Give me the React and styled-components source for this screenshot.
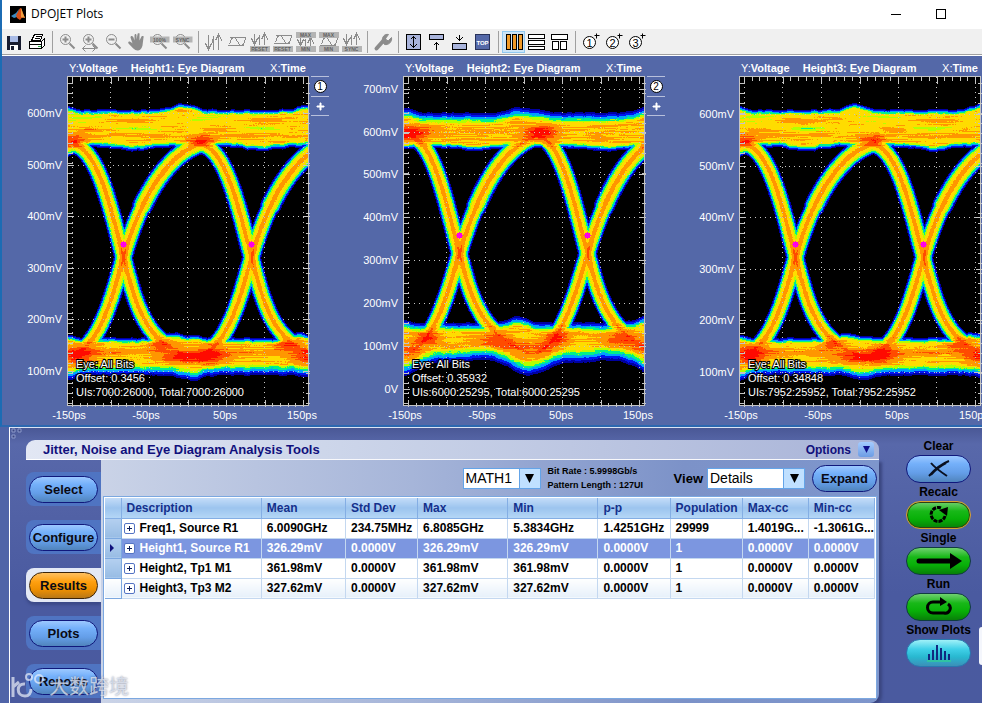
import React, { useState } from "react";
import styled, { createGlobalStyle, css } from "styled-components";

const PLOT_W = 242;
const PLOT_H = 330;
const PERIOD = 128;

const HEAT = [
  "",
  "#0000a0",
  "#0014f0",
  "#00a0ff",
  "#00f08c",
  "#b4ff00",
  "#ffdc00",
  "#ff9600",
  "#ff4b00",
  "#ff0a00",
];

const GRID_X = [5, 43, 82, 120, 159, 197, 236];

const baseEye = {
  seed: 3,
  falling: [[5, 68], [30, 71], [43, 131], [56, 181], [69, 231], [78, 266], [122, 279]],
  rising: [[6, 278], [34, 268], [46, 215], [56, 181], [66, 147], [80, 110], [106, 84], [114, 76], [124, 70], [136, 66]],
  topBand: {
    y0: 33, y1: 66,
    up: [[116, 6, 15]],
    down: [[66, 4, 18]],
    core: 6.7, k0: 1, k1: 0.9,
  },
  lowBand: {
    y0: 261, y1: 294,
    up: [[104, 5, 12], [126, 2, 12]],
    down: [[124, 5, 14]],
    core: 6.8, k0: 0.9, k1: 0.5,
  },
  hot: [
    [5, 64, 16, 5, 1.6], [133, 64, 16, 5, 1.6], [68, 52, 18, 2, -1.4], [196, 52, 18, 2, -1.4],
    [14, 42, 20, 5, -0.8], [142, 42, 20, 5, -0.8], [70, 44, 26, 2, 0.8], [200, 44, 26, 2, 0.8],
    [150, 53, 14, 2, 1], [22, 53, 14, 2, 1], [60, 59, 60, 2, 0.7], [190, 59, 60, 2, 0.7],
    [12, 279, 16, 8, 2.3], [143, 279, 16, 8, 2], [90, 269, 12, 6, 1.5], [218, 269, 12, 6, 1.5],
    [118, 281, 24, 5, 2.2], [240, 280, 16, 6, 2.2], [50, 276, 40, 3, 1], [178, 276, 40, 3, 1],
  ],
};

const plots = [
  {
    id: 1,
    title: "Height1: Eye Diagram",
    labels: [["600mV", 37], ["500mV", 89], ["400mV", 140], ["300mV", 192], ["200mV", 243], ["100mV", 295]],
    notes: ["Eye: All Bits", "Offset: 0.3456", "UIs:7000:26000, Total:7000:26000"],
    marker: 168,
    eye: baseEye,
  },
  {
    id: 2,
    title: "Height2: Eye Diagram",
    labels: [["700mV", 13], ["600mV", 56], ["500mV", 98], ["400mV", 141], ["300mV", 184], ["200mV", 227], ["100mV", 270], ["0V", 313]],
    notes: ["Eye: All Bits", "Offset: 0.35932", "UIs:6000:25295, Total:6000:25295"],
    marker: 159,
    eye: {
      seed: 11,
      falling: [[8, 60], [30, 66], [42, 124], [56, 177], [66, 214], [74, 256], [124, 276]],
      rising: [[6, 276], [32, 264], [44, 216], [56, 177], [66, 144], [82, 100], [106, 77], [114, 69], [124, 62], [136, 58]],
      topBand: { y0: 36, y1: 67, up: [[114, 5, 14], [6, 3, 10]], down: [[74, 3, 18]], core: 6.9, k0: 0.5, k1: 0.9 },
      lowBand: { y0: 246, y1: 278, up: [[114, 6, 14]], down: [[126, 16, 26], [52, 3, 20]], core: 6.9, k0: 0.6, k1: 0.4 },
      hot: [
        [8, 56, 20, 6, 2.4], [138, 56, 16, 6, 2.4], [72, 55, 34, 6, 0.2], [200, 55, 34, 6, 0.2],
        [26, 262, 12, 6, 1.8], [154, 262, 12, 6, 1.8], [88, 264, 16, 7, 1.4], [216, 264, 16, 7, 1.4],
        [112, 270, 24, 6, 0.9], [140, 272, 12, 7, 0.8], [8, 272, 12, 8, 0.8], [240, 270, 12, 7, 1],
      ],
    },
  },
  {
    id: 3,
    title: "Height3: Eye Diagram",
    labels: [["600mV", 38], ["500mV", 90], ["400mV", 141], ["300mV", 193], ["200mV", 244], ["100mV", 296]],
    notes: ["Eye: All Bits", "Offset: 0.34848", "UIs:7952:25952, Total:7952:25952"],
    marker: 168,
    eye: { ...baseEye, seed: 23 },
  },
];

const hash = (a, b, c) => {
  const s = Math.sin(a * 127.1 + b * 311.7 + c * 74.7) * 43758.5453;
  return s - Math.floor(s);
};

const smooth = (x, row, seed) => {
  const i = Math.floor(x);
  const f = x - i;
  return hash(i, row, seed) * (1 - f) + hash(i + 1, row, seed) * f;
};

const bezier = (pts) => {
  const out = [];
  for (let s = 0; s + 3 < pts.length; s += 3) {
    const [a, b, c, d] = pts.slice(s, s + 4);
    for (let i = 0; i <= 130; i++) {
      const t = i / 130;
      const u = 1 - t;
      out.push(
        [0, 1].map((k) => u * u * u * a[k] + 3 * u * u * t * b[k] + 3 * u * t * t * c[k] + t * t * t * d[k])
      );
    }
  }
  return out;
};

// distance from the trace centre (0..1) against heat level
const PROFILE = [[0, 7.6], [0.18, 7.1], [0.36, 6.5], [0.54, 5.8], [0.64, 4.9], [0.74, 4], [0.82, 3], [0.9, 2], [1, 1]];

const traceLevel = (u) => {
  if (u >= 1) return 0;
  for (let i = 1; i < PROFILE.length; i++) {
    if (u <= PROFILE[i][0]) {
      const [u0, l0] = PROFILE[i - 1];
      const [u1, l1] = PROFILE[i];
      return l0 + ((l1 - l0) * (u - u0)) / (u1 - u0);
    }
  }
  return 0;
};

const bumps = (x, list) =>
  list.reduce((sum, [cx, amp, w]) => {
    let d = (((x - cx) % PERIOD) + PERIOD) % PERIOD;
    if (d > PERIOD / 2) d -= PERIOD;
    return sum + amp * Math.exp(-(d * d) / (w * w));
  }, 0);

// builds one run-length path per heat level
const buildEye = ({ seed, falling, rising, topBand, lowBand, hot }) => {
  const dist = new Float32Array(PLOT_W * PLOT_H).fill(9);
  [falling, rising].forEach((curve) => {
    bezier(curve).forEach(([cx, cy]) => {
      [-PERIOD, 0, PERIOD].forEach((shift) => {
        const px = cx + shift;
        if (px < -12 || px > PLOT_W + 12) return;
        const r = curve === rising && cy < 130 ? 10.6 : 9.4;
        for (let y = Math.floor(cy - 12); y <= cy + 12; y++) {
          if (y < 0 || y >= PLOT_H) continue;
          for (let x = Math.max(0, Math.floor(px - 12)); x <= px + 12 && x < PLOT_W; x++) {
            const u = Math.hypot(x - px, y - cy) / r;
            const i = y * PLOT_W + x;
            if (u < dist[i]) dist[i] = u;
          }
        }
      });
    });
  });

  const bandLevel = (x, y, b) => {
    const ragged = (smooth(x / 5, 1, seed) - 0.5) * 2;
    const t0 = y - (b.y0 - bumps(x, b.up) + ragged);
    const t1 = b.y1 + bumps(x, b.down) + 5 - ragged - y;
    if (t0 < 0 || t1 < 0) return 0;
    return Math.min(b.core, 1 + t0 * b.k0, 1 + t1 * b.k1);
  };

  const paths = HEAT.map(() => "");
  for (let y = 0; y < PLOT_H; y++) {
    let start = 0;
    let prev = 0;
    for (let x = 0; x <= PLOT_W; x++) {
      let level = 0;
      if (x < PLOT_W) {
        const trace = traceLevel(dist[y * PLOT_W + x]);
        const band = Math.max(bandLevel(x, y, topBand), bandLevel(x, y, lowBand));
        let v = Math.max(trace, band);
        if (v > 0) {
          v += 0.07 * Math.min(trace, band);
          if (band > 0) {
            hot.forEach(([hx, hy, rx, ry, amp]) => {
              const q = ((x - hx) / rx) ** 2 + ((y - hy) / ry) ** 2;
              if (q < 5 && v > 5) v += amp * Math.exp(-q);
            });
            if (v > 4) v += (smooth(x / 16, y, seed) - 0.5) * 1.1;
          } else {
            // traces pile up where the edges cross
            const q = ((((x - 56) % PERIOD) / 5) ** 2) + ((y - falling[3][1]) / 12) ** 2;
            if (v > 6) v += 0.9 * Math.exp(-q);
          }
          v += (hash(x, y, seed) - 0.5) * 0.25;
          level = Math.max(0, Math.min(9, Math.floor(v)));
        }
      }
      if (level !== prev || x === PLOT_W) {
        if (prev > 0) paths[prev] += `M${start} ${y}h${x - start}v1h${start - x}z`;
        start = x;
        prev = level;
      }
    }
  }
  return paths;
};

plots.forEach((p) => {
  p.paths = buildEye(p.eye);
});

const columns = [
  ["Description", 140], ["Mean", 84], ["Std Dev", 72], ["Max", 90], ["Min", 90],
  ["p-p", 72], ["Population", 72], ["Max-cc", 66], ["Min-cc", 66],
];

const results = [
  ["Freq1, Source R1", "6.0090GHz", "234.75MHz", "6.8085GHz", "5.3834GHz", "1.4251GHz", "29999", "1.4019G...", "-1.3061G..."],
  ["Height1, Source R1", "326.29mV", "0.0000V", "326.29mV", "326.29mV", "0.0000V", "1", "0.0000V", "0.0000V"],
  ["Height2, Tp1 M1", "361.98mV", "0.0000V", "361.98mV", "361.98mV", "0.0000V", "1", "0.0000V", "0.0000V"],
  ["Height3, Tp3 M2", "327.62mV", "0.0000V", "327.62mV", "327.62mV", "0.0000V", "1", "0.0000V", "0.0000V"],
];

const tabs = ["Select", "Configure", "Results", "Plots", "Reports"];

/* ---------- icons ---------- */

const IconText = styled.text`
  font: bold 5px "Liberation Sans", sans-serif;
  fill: #606060;
`;

const DigitText = styled.text`
  font: 11px "Liberation Sans", sans-serif;
  fill: #000;
`;

const TopText = styled.text`
  font: bold 6px "Liberation Sans", sans-serif;
  fill: #fff;
`;

const Icon = ({ children, soft }) => (
  <svg width="20" height="20" viewBox="0 0 20 20" fill="none" shapeRendering={soft ? "auto" : "crispEdges"}>
    <g transform="translate(0.5 0.5)">{children}</g>
  </svg>
);

const Plate = ({ y, text }) => (
  <>
    <rect x="-1" y={y} width="20" height="6" fill="#b4b4b4" />
    <IconText x="9" y={y + 5} textAnchor="middle">{text}</IconText>
  </>
);

const Arrows = ({ top = 2, bottom = 17 }) => (
  <path
    d={`M1 ${bottom - 6}L4 ${bottom}L7 ${bottom - 6}M4 ${top}V${bottom}M7 ${bottom - 4}L9 ${top + 2}M9 ${top + 2}V${bottom}M14 ${top}V${bottom}M11 ${top + 6}L14 ${top}L18 ${top + 7}`}
    stroke="#8c8c8c"
  />
);

const Waves = ({ top = 5 }) => (
  <path d={`M2 ${top}H18M0 ${top + 8}H16M2 ${top + 7}Q5 ${top - 5} 10 ${top + 4}T18 ${top + 1}`} stroke="#8c8c8c" />
);

const Lens = ({ children }) => (
  <Icon soft>
    <circle cx="7" cy="7" r="5" stroke="#8c8c8c" />
    <path d="M11 11l5 5" stroke="#8c8c8c" strokeWidth="2" />
    {children}
  </Icon>
);

const NumberIcon = ({ n }) => (
  <Icon soft>
    <circle cx="8" cy="10" r="6" stroke="#000" fill="#fff" />
    <DigitText x="8" y="14" textAnchor="middle">{n}</DigitText>
    <path d="M15 1v5M13 3h5" stroke="#000" />
  </Icon>
);

const toolGroups = [
  [
    ["Save", <Icon><path d="M2 3h13l1 1v13H2z" fill="#181c30" /><path d="M5 3h8v6H5z" fill="#a9bbe6" /><path d="M5 12h8v5H5z" fill="#fff" /><path d="M6 13h3v4H6z" fill="#181c30" /></Icon>],
    ["Print", <Icon><path d="M7 2h8l-2 6H4z" fill="#fff" stroke="#000" /><path d="M8 4h5M7 6h5" stroke="#000" /><path d="M2 9h12l3-3v7l-3 3H2z" fill="#fff" stroke="#000" /><path d="M14 9v7M2 12h12" stroke="#000" /><path d="M10 14h3" stroke="#20b040" /></Icon>],
  ],
  [
    ["Zoom in", <Lens><path d="M7 4v6M4 7h6" stroke="#8c8c8c" strokeWidth="2" /></Lens>],
    ["Zoom horizontally", <Lens><path d="M7 4v6M4 7h6" stroke="#8c8c8c" strokeWidth="2" /><path d="M1 16h13M4 13l-3 3 3 3M11 13l3 3-3 3" stroke="#8c8c8c" /></Lens>],
    ["Zoom out", <Lens><path d="M4 7h6" stroke="#8c8c8c" strokeWidth="2" /></Lens>],
    ["Pan", <Icon soft><path d="M5 11L3 5c0-2 2-2 3 0l1 3V3c0-2 2-2 2 0v4l1-5c0-2 3-1 2 0v6l2-4c1-1 3 0 2 1l-1 8c-1 4-3 5-5 5-3 0-5-3-9-7-1-2 1-3 4 0z" fill="#8c8c8c" /></Icon>],
    ["Zoom to 100%", <Lens><Plate y={4} text="100%" /></Lens>],
    ["Sync zoom", <Lens><Plate y={4} text="SYNC" /></Lens>],
  ],
  [
    ["Vertical cursors", <Icon><Arrows /></Icon>],
    ["Horizontal cursors", <Icon><Waves /></Icon>],
    ["Reset vertical cursors", <Icon><Arrows top={1} bottom={12} /><Plate y={13} text="RESET" /></Icon>],
    ["Reset horizontal cursors", <Icon><Waves top={3} /><Plate y={13} text="RESET" /></Icon>],
    ["Vertical max min", <Icon><Arrows top={5} bottom={13} /><Plate y={-1} text="MAX" /><Plate y={13} text="MIN" /></Icon>],
    ["Horizontal max min", <Icon><Waves top={5} /><Plate y={-1} text="MAX" /><Plate y={13} text="MIN" /></Icon>],
    ["Sync cursors", <Icon><Arrows top={1} bottom={12} /><Plate y={13} text="SYNC" /></Icon>],
  ],
  [
    ["Configure plot", <Icon soft><path d="M3 16l8-9" stroke="#8c8c8c" strokeWidth="4" strokeLinecap="round" /><path d="M9 9c-1-4 2-8 6-7l-3 4 1 2 2 0 3-3c1 4-3 8-7 7z" fill="#8c8c8c" stroke="#8c8c8c" /></Icon>],
  ],
  [
    ["Full height", <Icon><rect x="2" y="2" width="14" height="15" fill="#a9b4dc" stroke="#000" /><path d="M9 4v11M6 7l3-3 3 3M6 12l3 3 3-3" stroke="#000" /></Icon>],
    ["Dock top", <Icon><rect x="2" y="2" width="14" height="5" fill="#a9b4dc" stroke="#000" /><path d="M9 10v7M6 13l3-3 3 3" stroke="#000" /></Icon>],
    ["Dock bottom", <Icon><rect x="2" y="11" width="14" height="6" fill="#a9b4dc" stroke="#000" /><path d="M9 2v6M6 5l3 3 3-3" stroke="#000" /></Icon>],
    ["Always on top", <Icon><rect x="2" y="2" width="14" height="15" fill="#5468a8" stroke="#28325a" /><TopText x="9" y="12" textAnchor="middle">TOP</TopText></Icon>],
  ],
  [
    ["Columns", <Icon><path d="M2 2h4v15H2zM8 2h4v15H8zM14 2h4v15h-4z" fill="#f09a28" stroke="#000" /></Icon>],
    ["Rows", <Icon><path d="M1 2h16v4H1zM1 8h16v4H1zM1 14h16v3H1z" fill="#fff" stroke="#000" /></Icon>],
    ["Mixed", <Icon><path d="M1 2h16v5H1zM2 9h6v8H2zM10 9h6v8h-6z" fill="#fff" stroke="#000" /></Icon>],
  ],
  [
    ["Plot 1", <NumberIcon n="1" />],
    ["Plot 2", <NumberIcon n="2" />],
    ["Plot 3", <NumberIcon n="3" />],
  ],
];

const actions = [
  ["Clear", "blue", <svg width="26" height="18" viewBox="0 0 26 18"><path d="M5 3c4 5 10 9 16 13M23 1C15 4 9 9 3 16M20 3C14 6 9 10 5 15" fill="none" stroke="#0a1020" strokeWidth="2" /></svg>],
  ["Recalc", "recalc", <svg width="24" height="18" viewBox="0 0 24 18"><path d="M18 10a7 7 0 1 1-4-8" fill="none" stroke="#000" strokeWidth="3" strokeDasharray="4 1" /><path d="M12 4l9-3-1 9z" fill="#000" /></svg>],
  ["Single", "green", <svg width="46" height="18" viewBox="0 0 46 18"><path d="M3 9h32" stroke="#000" strokeWidth="5" strokeLinecap="round" /><path d="M34 1l12 8-12 8z" fill="#000" /></svg>],
  ["Run", "green", <svg width="28" height="20" viewBox="0 0 28 20"><path d="M17 5H8a5 5 0 0 0 0 11h11a5 5 0 0 0 4-9" fill="none" stroke="#000" strokeWidth="3" /><path d="M15 0l7 5-7 4z" fill="#000" /></svg>],
  ["Show Plots", "cyan", <svg width="26" height="18" viewBox="0 0 26 18"><path d="M3 16V10M7 16V6M11 16V1M15 16V4M19 16V7M23 16v-6" stroke="#102880" strokeWidth="2" /><path d="M1 17h24" stroke="#30e080" /></svg>],
];

const ticks = (axis) => {
  let d = "";
  if (axis === "x") {
    for (let i = 0; i < 31; i++) {
      const x = Math.round(5 + i * 7.7);
      const len = i % 5 === 0 ? 7 : 4;
      d += `M${x} 0v${len}M${x} ${PLOT_H}v-${len}`;
    }
  } else {
    for (let y = 7; y < PLOT_H; y += 10) d += `M0 ${y}h5M${PLOT_W} ${y}h-4`;
  }
  return d;
};

const EyePlot = ({ plot }) => (
  <Chart width="309" height="350" viewBox="-67 0 309 350" role="img" aria-label={plot.title}>
    <rect width={PLOT_W} height={PLOT_H} fill="#000" />
    <g shapeRendering="crispEdges">
      {plot.paths.map((d, i) => (d ? <path key={i} d={d} fill={HEAT[i]} /> : null))}
      <g stroke="#c4c4c4" fill="none" transform="translate(0.5 0.5)">
        {GRID_X.map((x) => (
          <path key={x} d={`M${x} 0V${PLOT_H}`} strokeDasharray="1 4" />
        ))}
        {plot.labels.map(([text, y]) => (
          <React.Fragment key={text}>
            <path d={`M0 ${y}H${PLOT_W}`} strokeDasharray="1 4" />
            <path d={`M0 ${y}h6M${PLOT_W} ${y}h-6`} />
          </React.Fragment>
        ))}
        <path d={ticks("x")} />
        <path d={ticks("y")} />
        <rect width={PLOT_W - 1} height={PLOT_H - 1} />
      </g>
      {[56, 184].map((x) => (
        <path key={x} d={`M${x - 2} ${plot.marker - 2}h5v5h-5zM${x - 3} ${plot.marker}h7v1h-7zM${x} ${plot.marker - 3}h1v7h-1z`} fill="#ff00e6" />
      ))}
    </g>
    {plot.labels.map(([text, y]) => (
      <AxisText key={text} x="-5" y={y + 4} textAnchor="end">{text}</AxisText>
    ))}
    {[["-150ps", 2], ["-50ps", 79], ["50ps", 158], ["150ps", 235]].map(([text, x]) => (
      <AxisText key={text} x={x} y="343" textAnchor="middle">{text}</AxisText>
    ))}
    {plot.notes.map((text, i) => (
      <NoteText key={text} x="9" y={292 + i * 14}>{text}</NoteText>
    ))}
  </Chart>
);

const PlotPane = ({ plot }) => (
  <Pane>
    <PaneTitle>
      <span>Y:<b>Voltage</b></span>
      <b>{plot.title}</b>
      <PaneAxis>X:<b>Time</b></PaneAxis>
    </PaneTitle>
    <PaneBody>
      <EyePlot plot={plot} />
      <PaneTools>
        <PaneButton aria-label={`Plot ${plot.id}`}><PlotNumber>{plot.id}</PlotNumber></PaneButton>
        <PaneButton aria-label="Add">
          <svg width="9" height="9" viewBox="0 0 9 9"><path d="M4 1h1v3h3v1H5v3H4V5H1V4h3z" fill="#fff" stroke="#fff" /></svg>
        </PaneButton>
      </PaneTools>
    </PaneBody>
  </Pane>
);

const Triangle = ({ size = 9, color = "#000" }) => (
  <svg width={size} height={size} viewBox="0 0 10 10"><path d="M0 0h10L5 10z" fill={color} /></svg>
);

const Combo = ({ label, options, width }) => {
  const [value, setValue] = useState(options[0]);
  return (
    <ComboBox $width={width}>
      <ComboSelect aria-label={label} value={value} onChange={(e) => setValue(e.target.value)}>
        {options.map((o) => <option key={o}>{o}</option>)}
      </ComboSelect>
      <ComboArrow><Triangle /></ComboArrow>
    </ComboBox>
  );
};

const App = () => {
  const [tab, setTab] = useState("Results");
  const [selected, setSelected] = useState(1);

  return (
    <Page>
      <GlobalStyle />
      <PlotWindow>
        <TitleBar>
          <svg width="16" height="18" viewBox="0 0 16 18">
            <rect width="16" height="17" y="1" fill="#000" />
            <path d="M1 11l5-3 3-4-2 8-3 1z" fill="#3a8ac0" />
            <path d="M6 10c2-2 3-7 5-7 1 2 2 6 4 10-2-1-3-1-5 2L7 13z" fill="#d85018" />
            <path d="M11 3c1 2 2 6 4 10-2-1-3 0-4-1z" fill="#f0a040" />
          </svg>
          <WindowName>DPOJET Plots</WindowName>
          <WindowButton aria-label="Minimize">
            <svg width="10" height="10" viewBox="0 0 10 10"><path d="M0 5h10v1H0z" fill="#000" /></svg>
          </WindowButton>
          <WindowButton aria-label="Maximize">
            <svg width="10" height="10" viewBox="0 0 10 10"><path d="M0 0h10v10H0zM1 1v8h8V1z" fill="#000" fillRule="evenodd" /></svg>
          </WindowButton>
        </TitleBar>
        <Toolbar>
          {toolGroups.map((group, i) => (
            <ToolGroup key={i}>
              {group.map(([name, icon]) => (
                <ToolButton key={name} aria-label={name} $active={name === "Columns"}>{icon}</ToolButton>
              ))}
            </ToolGroup>
          ))}
        </Toolbar>
        <PlotArea>
          {plots.map((p) => <PlotPane key={p.id} plot={p} />)}
        </PlotArea>
      </PlotWindow>

      <Console>
        <Grip width="11" height="11" viewBox="0 0 11 11">
          <path d="M1 1h3v3H1zM7 1h3v3H7zM1 7h3v3H1z" fill="#3a4580" stroke="#8c9acb" />
        </Grip>
        <Tools>
          <ToolsHeader>
            <ToolsTitle>Jitter, Noise and Eye Diagram Analysis Tools</ToolsTitle>
            <OptionsLabel id="options">Options</OptionsLabel>
            <OptionsButton aria-labelledby="options"><Triangle size={7} color="#10108c" /></OptionsButton>
          </ToolsHeader>
          <ToolsBody>
            <Tabs>
              {tabs.map((name) => (
                <TabSlot key={name} $active={name === tab}>
                  <Pill $tone={name === tab ? "orange" : "blue"} onClick={() => setTab(name)}>{name}</Pill>
                </TabSlot>
              ))}
            </Tabs>
            <Content>
              <Controls>
                <Combo label="Source" options={["MATH1", "MATH2"]} width={78} />
                <Rates>
                  <span>Bit Rate : 5.9998Gb/s</span>
                  <span>Pattern Length : 127UI</span>
                </Rates>
                <ViewLabel>View</ViewLabel>
                <Combo label="View" options={["Details", "Summary"]} width={98} />
                <Pill $tone="blue" $size="medium">Expand</Pill>
              </Controls>
              <TableFrame>
                <Table>
                  <colgroup>
                    <Col $w={16} />
                    {columns.map(([name, w]) => <Col key={name} $w={w} />)}
                  </colgroup>
                  <thead>
                    <tr>
                      <th aria-label="Selected" />
                      {columns.map(([name]) => <th key={name}>{name}</th>)}
                    </tr>
                  </thead>
                  <tbody>
                    {results.map((row, i) => (
                      <Row key={row[0]} $selected={i === selected} onClick={() => setSelected(i)}>
                        <Marker>
                          {i === selected && (
                            <svg width="4" height="8" viewBox="0 0 4 8"><path d="M0 0l4 4-4 4z" fill="#10107c" /></svg>
                          )}
                        </Marker>
                        {row.map((cell, c) => (
                          <td key={c}>
                            {c === 0 ? (
                              <NameCell>
                                <ExpandButton aria-label={`Expand ${cell}`}>
                                  <svg width="7" height="7" viewBox="0 0 7 7"><path d="M3 1h1v2h2v1H4v2H3V4H1V3h2z" fill="#10205c" /></svg>
                                </ExpandButton>
                                {cell}
                              </NameCell>
                            ) : cell}
                          </td>
                        ))}
                      </Row>
                    ))}
                  </tbody>
                </Table>
              </TableFrame>
            </Content>
          </ToolsBody>
        </Tools>
        <Actions>
          {actions.map(([name, tone, icon]) => (
            <Action key={name}>
              <span>{name}</span>
              <Pill $tone={tone} $size="large" aria-label={name}>{icon}</Pill>
            </Action>
          ))}
        </Actions>
        <SideHandle />
        <Watermark>
          <svg width="34" height="28" viewBox="0 0 34 28" fill="none" stroke="currentColor" strokeWidth="3">
            <path d="M2 5v20M14 12c-9-1-9 12 0 12 4 0 6-3 6-7M2 15l6-5" />
            <circle cx="18" cy="5" r="3" strokeWidth="2" />
            <circle cx="28" cy="7" r="4" strokeWidth="2" />
          </svg>
          大数跨境
        </Watermark>
      </Console>
    </Page>
  );
};

export default App;

const GlobalStyle = createGlobalStyle`
  * {
    box-sizing: border-box;
  }

  body {
    margin: 0;
    font-family: "Liberation Sans", Arial, sans-serif;
    color: #000;
    overflow: hidden;
  }

  button {
    font-family: inherit;
    padding: 0;
    border: none;
    background: none;
    cursor: pointer;
  }

  svg {
    display: block;
    flex: none;
  }
`;

const Page = styled.div`
  display: flex;
  flex-direction: column;
  height: 100vh;
  background: #5064a8;
  overflow: hidden;
`;

const PlotWindow = styled.section`
  flex: none;
  border-left: 2px solid #1c6cb4;
  border-bottom: 2px solid #2c68b0;
`;

const TitleBar = styled.header`
  display: flex;
  align-items: center;
  height: 29px;
  padding: 0 19px 2px 8px;
  background: #fff;
`;

const WindowName = styled.h1`
  flex: 1;
  margin: 0 0 0 5px;
  font: 12px "Open Sans", sans-serif;
`;

const WindowButton = styled.button`
  display: flex;
  align-items: center;
  justify-content: center;
  width: 45px;
  height: 27px;
`;

const Toolbar = styled.div`
  display: flex;
  align-items: center;
  height: 26px;
  background: #f0f0f0;
  border-bottom: 1px solid #a0a0a0;
`;

const ToolGroup = styled.div`
  display: flex;
  align-items: center;

  & + & {
    border-left: 1px solid #a0a0a0;
    margin-left: 4px;
    padding-left: 3px;
  }
`;

const ToolButton = styled.button`
  display: flex;
  align-items: center;
  justify-content: center;
  width: 23px;
  height: 22px;
  ${({ $active }) =>
    $active &&
    css`
      background: #cce4f7;
      outline: 1px solid #90c8f0;
      outline-offset: -1px;
    `}
`;

const PlotArea = styled.main`
  display: flex;
  height: 370px;
  background: #5468a8;
  border-top: 1px solid #fff;
  overflow: hidden;
`;

const Pane = styled.article`
  flex: 0 0 336px;
  color: #fff;
`;

const PaneTitle = styled.div`
  display: flex;
  gap: 13px;
  padding: 5px 32px 0 67px;
  height: 20px;
  font-size: 11px;
  line-height: 14px;
`;

const PaneAxis = styled.span`
  margin-left: auto;
`;

const PaneBody = styled.div`
  display: flex;
`;

const Chart = styled.svg`
  overflow: visible;
  margin-left: -2px;
`;

const AxisText = styled.text`
  font: 11px "Liberation Sans", sans-serif;
  fill: #fff;
`;

const NoteText = styled(AxisText)`
  stroke: #000;
  stroke-width: 2px;
  paint-order: stroke;
`;

const PaneTools = styled.div`
  width: 18px;
  margin-left: 2px;
`;

const PaneButton = styled.button`
  display: flex;
  align-items: center;
  justify-content: center;
  width: 18px;
  height: 20px;
  border-top: 1px solid #b8c0dc;

  &:last-child {
    border-bottom: 1px solid #b8c0dc;
  }
`;

const PlotNumber = styled.span`
  width: 13px;
  height: 13px;
  border: 1px solid #000;
  border-radius: 50%;
  background: #fff;
  color: #000;
  font-size: 10px;
  line-height: 11px;
  text-align: center;
`;

const Console = styled.section`
  position: relative;
  flex: 1;
  display: flex;
  min-height: 0;
  margin-left: 9px;
  border-left: 1px solid #fff;
  border-top: 1px solid #dce4f4;
  background: linear-gradient(#4a5896, #5868aa 16px, #4a5aa0 60%, #4a5a9f);
  font-weight: bold;
`;

const Grip = styled.svg`
  position: absolute;
  left: 1px;
  top: 0;
`;

const Tools = styled.div`
  flex: 1;
  display: flex;
  flex-direction: column;
  min-width: 0;
  padding: 12px 0 0 16px;
`;

const ToolsHeader = styled.div`
  display: flex;
  align-items: center;
  flex: none;
  height: 20px;
  padding: 0 5px 0 17px;
  border-radius: 9px 9px 0 0;
  border-bottom: 1px solid #fff;
  background: linear-gradient(90deg, #e2e7f4, #cdd6ea 35%, #a9b4d8);
  color: #10107c;
`;

const ToolsTitle = styled.h2`
  flex: 1;
  margin: 0;
  font-size: 13px;
  line-height: 16px;
`;

const OptionsLabel = styled.span`
  font-size: 12px;
  margin-right: 7px;
`;

const OptionsButton = styled.button`
  display: flex;
  align-items: center;
  justify-content: center;
  width: 16px;
  height: 15px;
  border-radius: 3px;
  background: linear-gradient(#a4ccff, #6c9ce4);
`;

const ToolsBody = styled.div`
  flex: 1;
  display: flex;
  min-height: 0;
`;

const Tabs = styled.nav`
  display: flex;
  flex-direction: column;
  gap: 14px;
  width: 75px;
  padding-top: 12px;
`;

const TabSlot = styled.div`
  display: flex;
  align-items: center;
  flex: none;
  height: 34px;
  padding-left: 3px;
  border-radius: 8px 0 0 8px;
  background: ${({ $active }) => ($active ? "#e4e9f5" : "#4f74c2")};
  box-shadow: ${({ $active }) => ($active ? "0 3px 3px #3c4a88" : "none")};
`;

const tones = {
  blue: css`
    background: linear-gradient(#9cc8ff, #74b0fa 30%, #649ee8 65%, #5084bc);
    border-color: #10187c;
  `,
  orange: css`
    background: linear-gradient(#ffc060, #ffa010 35%, #f09000 65%, #b87818);
    border-color: #3c2408;
  `,
  green: css`
    background: linear-gradient(#70d070, #18b818 35%, #08b008 65%, #088008);
    border-color: #103c40;
  `,
  recalc: css`
    background: linear-gradient(#70d070, #18b818 35%, #08b008 65%, #088008);
    border-color: #d8a030;
    box-shadow: inset 0 0 0 1px #304010;
  `,
  cyan: css`
    background: linear-gradient(#a0f0f8, #40d0e8 35%, #28b8d0 65%, #3c90b8);
    border-color: #2878b0;
  `,
};

const sizes = {
  small: [69, 27],
  medium: [65, 27],
  large: [65, 28],
};

const Pill = styled.button`
  display: flex;
  align-items: center;
  justify-content: center;
  flex: none;
  width: ${({ $size = "small" }) => sizes[$size][0]}px;
  height: ${({ $size = "small" }) => sizes[$size][1]}px;
  border: 1px solid;
  border-radius: 14px;
  font-size: 13px;
  font-weight: bold;
  color: #0a0a14;
  ${({ $tone }) => tones[$tone]}
`;

const Content = styled.div`
  flex: 1;
  display: flex;
  flex-direction: column;
  min-width: 0;
  padding: 0 2px 4px;
  border-radius: 0 0 9px 0;
  background: linear-gradient(90deg, #cad3e7, #a6b5d9 40%, #7c92c8 75%, #7e96cc);
  box-shadow: 3px 2px 3px #3a4680;
`;

const Controls = styled.div`
  display: flex;
  align-items: center;
  justify-content: flex-end;
  flex: none;
  height: 36px;
`;

const ComboBox = styled.div`
  position: relative;
  flex: none;
  width: ${({ $width }) => $width}px;
  height: 21px;
`;

const ComboSelect = styled.select`
  appearance: none;
  width: 100%;
  height: 100%;
  padding: 0 0 0 2px;
  border: 1px solid #64a4e8;
  border-radius: 0;
  background: #fff;
  color: #000;
  font: 14px "Liberation Sans", sans-serif;
`;

const ComboArrow = styled.span`
  position: absolute;
  top: 1px;
  right: 1px;
  bottom: 1px;
  width: 21px;
  display: flex;
  align-items: center;
  justify-content: center;
  border-left: 1px solid #64a4e8;
  background: #c0e0ff;
  pointer-events: none;
`;

const Rates = styled.div`
  display: flex;
  flex-direction: column;
  width: 126px;
  margin-left: 7px;
  font-size: 9px;
  line-height: 14px;
  white-space: nowrap;
`;

const ViewLabel = styled.span`
  margin-right: 4px;
  font-size: 13px;

  & ~ ${Pill} {
    margin-left: 7px;
  }
`;

const TableFrame = styled.div`
  flex: 1;
  min-height: 0;
  padding: 1px;
  border: 1px solid #7ca8e0;
  background: #fff;
`;

const Table = styled.table`
  width: 100%;
  table-layout: fixed;
  border-collapse: collapse;
  font-size: 12px;

  th,
  td {
    height: 20px;
    padding: 0 0 0 5px;
    border-right: 1px solid #c4d8f0;
    border-bottom: 1px solid #c4d8f0;
    line-height: 18px;
    text-align: left;
    white-space: nowrap;
    overflow: hidden;
  }

  th {
    border-color: #84aee4;
    background: linear-gradient(#c4dcf8, #9cc4ee 50%, #b4d6f6);
    color: #14308c;
  }

  tbody tr:last-child td {
    background: linear-gradient(#fff, #e6f0fa);
  }
`;

const Col = styled.col`
  width: ${({ $w }) => $w}px;
`;

const Row = styled.tr`
  background: ${({ $selected }) => ($selected ? "#7c96e0" : "#fff")};
  color: ${({ $selected }) => ($selected ? "#fff" : "#000")};
`;

const Marker = styled.td`
  ${Table} tbody tr & {
    background: linear-gradient(#b4d0f0, #98bce4);
    border-color: #7ca8e0;
  }
`;

const NameCell = styled.span`
  display: flex;
  align-items: center;
  gap: 5px;
  margin-left: -3px;
`;

const ExpandButton = styled.button`
  display: flex;
  align-items: center;
  justify-content: center;
  width: 11px;
  height: 11px;
  border: 1px solid #5474c4;
  border-radius: 2px;
  background: #fff;
`;

const Actions = styled.aside`
  flex: none;
  display: flex;
  flex-direction: column;
  width: 103px;
  padding: 9px 11px 0 27px;
  font-size: 12px;
`;

const Action = styled.div`
  display: flex;
  flex-direction: column;
  align-items: center;
  height: 46px;
  line-height: 18px;
  white-space: nowrap;
`;

const SideHandle = styled.div`
  position: absolute;
  right: 0;
  top: 199px;
  width: 3px;
  height: 38px;
  border-radius: 3px 0 0 3px;
  background: #f4f6fc;
`;

const Watermark = styled.div`
  position: absolute;
  left: 1px;
  bottom: 3px;
  display: flex;
  align-items: center;
  gap: 4px;
  color: rgba(235, 240, 250, 0.7);
  text-shadow: 0 0 2px rgba(90, 100, 130, 0.8);
  font: 20px/28px "Noto Sans CJK SC", sans-serif;
  pointer-events: none;
`;
